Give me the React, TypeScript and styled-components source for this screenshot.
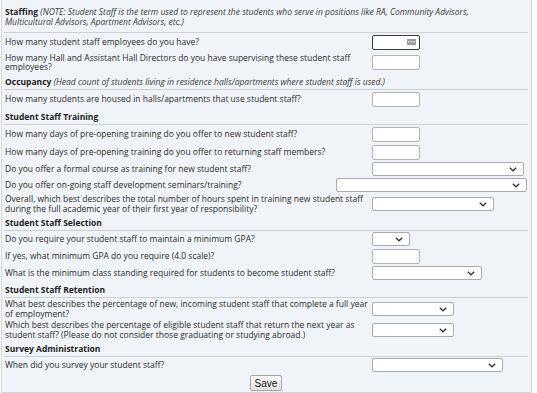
import React from "react";
import styled, { createGlobalStyle } from "styled-components";

const GlobalStyle = createGlobalStyle`
  body {
    margin: 0;
    background: #ffffff;
    font-family: "Open Sans", "Liberation Sans", sans-serif;
    color: #2b2b2b;
  }
`;

type Field =
  | { kind: "text"; focused?: boolean }
  | { kind: "select"; width: number; shift?: number };

type Question = { label: string; field: Field };

type Section = { title: string; note?: string; questions: Question[] };

const sections: Section[] = [
  {
    title: "Staffing",
    note:
      "(NOTE: Student Staff is the term used to represent the students who serve in positions like RA, Community Advisors, Multicultural Advisors, Apartment Advisors, etc.)",
    questions: [
      {
        label: "How many student staff employees do you have?",
        field: { kind: "text", focused: true },
      },
      {
        label:
          "How many Hall and Assistant Hall Directors do you have supervising these student staff employees?",
        field: { kind: "text" },
      },
    ],
  },
  {
    title: "Occupancy",
    note:
      "(Head count of students living in residence halls/apartments where student staff is used.)",
    questions: [
      {
        label:
          "How many students are housed in halls/apartments that use student staff?",
        field: { kind: "text" },
      },
    ],
  },
  {
    title: "Student Staff Training",
    questions: [
      {
        label:
          "How many days of pre-opening training do you offer to new student staff?",
        field: { kind: "text" },
      },
      {
        label:
          "How many days of pre-opening training do you offer to returning staff members?",
        field: { kind: "text" },
      },
      {
        label: "Do you offer a formal course as training for new student staff?",
        field: { kind: "select", width: 152 },
      },
      {
        label: "Do you offer on-going staff development seminars/training?",
        field: { kind: "select", width: 191, shift: 36 },
      },
      {
        label:
          "Overall, which best describes the total number of hours spent in training new student staff during the full academic year of their first year of responsibility?",
        field: { kind: "select", width: 122 },
      },
    ],
  },
  {
    title: "Student Staff Selection",
    questions: [
      {
        label: "Do you require your student staff to maintain a minimum GPA?",
        field: { kind: "select", width: 38 },
      },
      {
        label: "If yes, what minimum GPA do you require (4.0 scale)?",
        field: { kind: "text" },
      },
      {
        label:
          "What is the minimum class standing required for students to become student staff?",
        field: { kind: "select", width: 110 },
      },
    ],
  },
  {
    title: "Student Staff Retention",
    questions: [
      {
        label:
          "What best describes the percentage of new, incoming student staff that complete a full year of employment?",
        field: { kind: "select", width: 82 },
      },
      {
        label:
          "Which best describes the percentage of eligible student staff that return the next year as student staff? (Please do not consider those graduating or studying abroad.)",
        field: { kind: "select", width: 82 },
      },
    ],
  },
  {
    title: "Survey Administration",
    questions: [
      {
        label: "When did you survey your student staff?",
        field: { kind: "select", width: 131 },
      },
    ],
  },
];

const Panel = styled.form`
  box-sizing: border-box;
  width: 531px;
  margin-left: 1px;
  padding: 0 3px 1px 2px;
  background: #f0f4f8;
  border: 1px solid #d3d7db;
  border-top: none;
  font-size: 8.5px;
`;

const SectionHead = styled.div<{ $first?: boolean }>`
  padding: ${(p) => (p.$first ? "7px 30px 5px 1px" : "4px 1px 2px")};
  line-height: 10px;
  border-bottom: 1px solid #cdd0d3;
`;

const Title = styled.span`
  font-weight: 700;
  color: #222;
`;

const Note = styled.span`
  font-style: italic;
  color: #3a3a3a;
`;

const Row = styled.div<{ $pad: number }>`
  display: grid;
  grid-template-columns: 368px 1fr;
  align-items: center;
  padding: ${(p) => p.$pad}px 0;
`;

const Label = styled.div`
  padding: 0 1px;
  line-height: 9.5px;
`;

const Control = styled.div<{ $shift?: number }>`
  display: flex;
  margin-left: ${(p) => (p.$shift ? -p.$shift : 0)}px;
`;

const TextBox = styled.div<{ $focused?: boolean }>`
  position: relative;
  box-sizing: border-box;
  width: 48px;
  height: 15px;
  background: #ffffff;
  border: 1px solid ${(p) => (p.$focused ? "#3c3c3c" : "#b4b4b4")};
  border-radius: 2px;
`;

const FillBadge = styled.span`
  position: absolute;
  right: 3px;
  top: 3px;
  width: 9px;
  height: 6px;
  background: #9d9d9d;
  display: flex;
  align-items: center;
  justify-content: center;
`;

const Dropdown = styled.div<{ $width: number }>`
  position: relative;
  box-sizing: border-box;
  width: ${(p) => p.$width}px;
  height: 14px;
  background: #ffffff;
  border: 1px solid #a9acaf;
  border-radius: 2px;
`;

const Chevron = styled.svg`
  position: absolute;
  right: 6px;
  top: 4px;
`;

const SaveBar = styled.div`
  display: flex;
  justify-content: center;
  padding: 2px 0 0;
`;

const SaveButton = styled.button`
  box-sizing: border-box;
  width: 32px;
  height: 16px;
  padding: 0;
  font-family: "Liberation Sans", Arial, sans-serif;
  font-size: 10px;
  color: #111;
  background: linear-gradient(#fafafa, #e4e4e4);
  border: 1px solid #a6a6a6;
  border-radius: 2px;
`;

function FieldView({ field }: { field: Field }) {
  if (field.kind === "text") {
    return (
      <Control>
        <TextBox $focused={field.focused}>
          {field.focused && (
            <FillBadge>
              <svg width="7" height="2" viewBox="0 0 7 2">
                <rect x="0" y="0" width="1.4" height="1.4" fill="#e8e8e8" />
                <rect x="2.8" y="0" width="1.4" height="1.4" fill="#e8e8e8" />
                <rect x="5.6" y="0" width="1.4" height="1.4" fill="#e8e8e8" />
              </svg>
            </FillBadge>
          )}
        </TextBox>
      </Control>
    );
  }
  return (
    <Control $shift={field.shift}>
      <Dropdown $width={field.width}>
        <Chevron width="8" height="5" viewBox="0 0 8 5">
          <path d="M0.8 0.8 L4 3.8 L7.2 0.8" fill="none" stroke="#333" strokeWidth="1.3" />
        </Chevron>
      </Dropdown>
    </Control>
  );
}

export default function App() {
  return (
    <>
      <GlobalStyle />
      <Panel onSubmit={(e) => e.preventDefault()}>
        {sections.map((s, i) => (
          <React.Fragment key={s.title}>
            <SectionHead $first={i === 0}>
              <Title>{s.title}</Title>
              {s.note && <Note> {s.note}</Note>}
            </SectionHead>
            {s.questions.map((q) => (
              <Row key={q.label} $pad={q.field.kind === "text" ? 1.5 : 1}>
                <Label>{q.label}</Label>
                <FieldView field={q.field} />
              </Row>
            ))}
          </React.Fragment>
        ))}
        <SaveBar>
          <SaveButton type="submit">Save</SaveButton>
        </SaveBar>
      </Panel>
    </>
  );
}
